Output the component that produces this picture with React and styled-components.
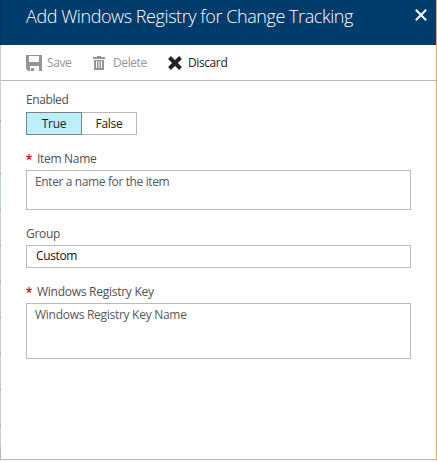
import React from "react";
import styled, { createGlobalStyle } from "styled-components";

const GlobalStyle = createGlobalStyle`
  * { box-sizing: border-box; }
  body { margin: 0; background: #fff; font-family: "Open Sans", "Noto Sans", sans-serif; }
`;

const Frame = styled.div`
  display: flex;
  width: 437px;
  height: 460px;
  border-right: 1px solid #e8b34b;
  border-bottom: 1px solid #e8b34b;
  background: #fff;
`;

const EdgeStrip = styled.div`
  flex: 0 0 1px;
  background: linear-gradient(
    #06325c 0 45px, #ccc 45px 120px, #999 120px 121px, #ccc 121px 173px,
    #999 173px 174px, #bdd3dc 174px 209px, #999 209px 210px, #ccc 210px 245px,
    #999 245px 246px, #ccc 246px 281px, #999 281px 282px, #ccc 282px 317px,
    #999 317px 318px, #ccc 318px 353px, #999 353px 354px, #ccc 354px 389px,
    #999 389px 390px, #ccc 390px 425px, #999 425px 426px, #ccc 426px 447px,
    #b5b5b5 447px
  );
`;

const Blade = styled.section`
  flex: 1;
  min-width: 0;
`;

const Header = styled.header`
  display: flex;
  justify-content: space-between;
  height: 45px;
  padding: 4px 9px 0 25px;
  background: #003c6c;
  color: #fff;
`;

const Title = styled.h1`
  margin: 0;
  font-size: 18px;
  font-weight: 300;
  line-height: 24px;
  letter-spacing: -0.43px;
  white-space: nowrap;
`;

const CloseIcon = styled.svg`
  width: 12px;
  height: 12px;
  margin-top: 5px;
`;

const Toolbar = styled.div`
  display: flex;
  height: 36px;
  border-bottom: 1px solid #b9b9b9;
  padding-left: 25px;
`;

const Command = styled.button`
  display: flex;
  align-items: center;
  width: ${(p) => p.$width}px;
  padding: 0;
  border: 0;
  background: none;
  font: 12px/16px "Open Sans", sans-serif;
  letter-spacing: -0.4px;
  color: ${(p) => (p.$active ? "#222" : "#959595")};
  gap: ${(p) => p.$gap}px;

  svg { flex: none; }
`;

const Form = styled.form`
  display: flex;
  flex-direction: column;
  padding: 11px 25px 0;
`;

const Label = styled.label`
  display: flex;
  height: 16px;
  margin-top: ${(p) => p.$top || 0}px;
  margin-bottom: ${(p) => p.$bottom}px;
  font-size: 12px;
  line-height: 16px;
  letter-spacing: ${(p) => p.$spacing || -0.3}px;
  color: #505050;
`;

const Asterisk = styled.svg`
  width: 6px;
  height: 6px;
  margin: 3px 5px 0 0;
`;

const Toggle = styled.div`
  display: flex;
  width: 111px;
  height: 23px;
`;

const Option = styled.button`
  flex: ${(p) => (p.$selected ? "0 0 56px" : "0 0 55px")};
  padding: 0;
  border: 1px solid ${(p) => (p.$selected ? "#7c8488" : "#b9b9b9")};
  border-left-width: ${(p) => (p.$selected ? 1 : 0)}px;
  background: ${(p) => (p.$selected ? "#bdeffb" : "#fff")};
  color: #222;
  font: 12px/20px "Open Sans", sans-serif;
  letter-spacing: -0.3px;
`;

const Field = styled.div`
  width: 385px;
  height: ${(p) => p.$height}px;
  padding: ${(p) => p.$pad};
  border: 1px solid #b9b9b9;
  font-size: 12px;
  line-height: 16px;
  letter-spacing: ${(p) => p.$spacing || -0.38}px;
  color: ${(p) => (p.$filled ? "#111" : "#585858")};
`;

const Required = () => (
  <Asterisk viewBox="0 0 6 6" stroke="#e81123" strokeWidth="1.2">
    <path d="M3 0V3L0.2 2.1M3 3L5.8 2.1M3 3L1.3 5.6M3 3L4.7 5.6" fill="none" />
  </Asterisk>
);

export default function App() {
  return (
    <>
      <GlobalStyle />
      <Frame>
        <EdgeStrip />
        <Blade>
          <Header>
            <Title>Add Windows Registry for Change Tracking</Title>
            <CloseIcon viewBox="0 0 12 12" stroke="#fff" strokeWidth="2">
              <path d="M0.8 0.8L11.2 11.2M11.2 0.8L0.8 11.2" />
            </CloseIcon>
          </Header>
          <Toolbar>
            <Command type="button" $width={67} $gap={5}>
              <svg width="16" height="16" viewBox="0 0 16 16" fill="#959595">
                <path fillRule="evenodd" d="M0 0H16V16H13V11H4V16H2L0 14ZM3 1V7H13V1Z" />
                <path d="M5 13H8V16H5Z" />
              </svg>
              Save
            </Command>
            <Command type="button" $width={75} $gap={8}>
              <svg width="12" height="14" viewBox="0 0 12 14" fill="#959595">
                <path fillRule="evenodd" d="M4 0H8V1H12V3H0V1H4ZM1 4H11V14H1ZM3 5V12H4V5ZM5.5 5V12H6.5V5ZM8 5V12H9V5Z" />
              </svg>
              Delete
            </Command>
            <Command type="button" $width={70} $gap={6} $active>
              <svg width="14" height="14" viewBox="0 0 14 14" stroke="#222" strokeWidth="4">
                <path d="M1.5 1.5L12.5 12.5M12.5 1.5L1.5 12.5" />
              </svg>
              Discard
            </Command>
          </Toolbar>
          <Form>
            <Label $bottom={4} $spacing={-0.4}>Enabled</Label>
            <Toggle>
              <Option type="button" $selected>True</Option>
              <Option type="button">False</Option>
            </Toggle>
            <Label $top={16} $bottom={3}><Required />Item Name</Label>
            <Field $height={40} $pad="3px 8px">Enter a name for the item</Field>
            <Label $top={16} $bottom={3}>Group</Label>
            <Field $height={23} $pad="2px 9px" $filled>Custom</Field>
            <Label $top={16} $bottom={3} $spacing={-0.26}><Required />Windows Registry Key</Label>
            <Field $height={56} $pad="3px 8px" $spacing={-0.28}>Windows Registry Key Name</Field>
          </Form>
        </Blade>
      </Frame>
    </>
  );
}
